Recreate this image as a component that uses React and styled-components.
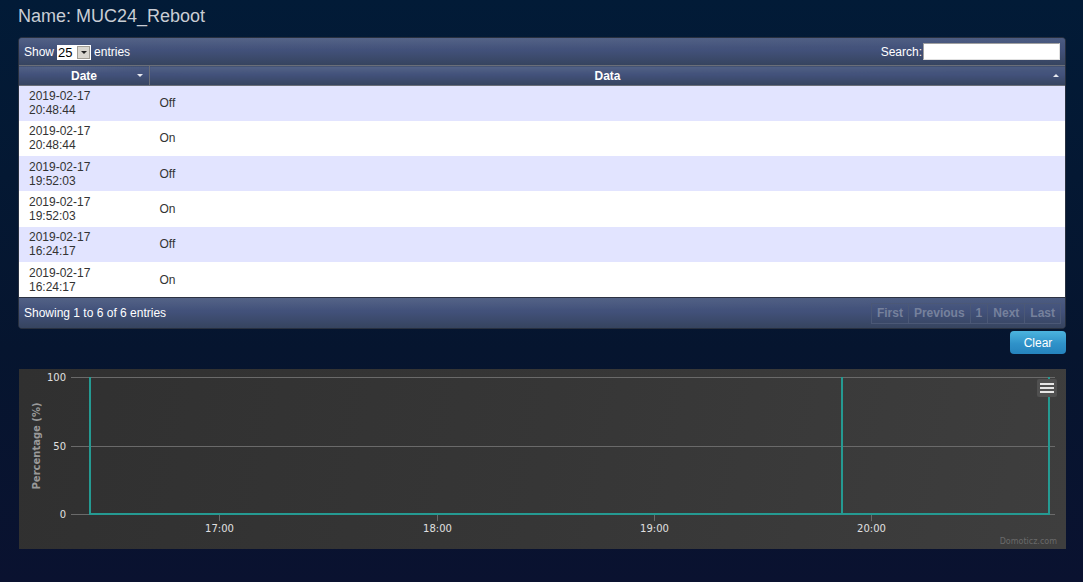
import React from 'react';
import styled, { createGlobalStyle } from 'styled-components';

const GlobalStyle = createGlobalStyle`
  html, body {
    margin: 0;
    padding: 0;
    height: 100%;
  }
  body {
    background: linear-gradient(to bottom, #021b37 0%, #06152f 60%, #0a1230 100%);
    font-family: "Liberation Sans", Arial, sans-serif;
    min-height: 582px;
  }
`;

const rows = [
  { date: '2019-02-17', time: '20:48:44', data: 'Off' },
  { date: '2019-02-17', time: '20:48:44', data: 'On' },
  { date: '2019-02-17', time: '19:52:03', data: 'Off' },
  { date: '2019-02-17', time: '19:52:03', data: 'On' },
  { date: '2019-02-17', time: '16:24:17', data: 'Off' },
  { date: '2019-02-17', time: '16:24:17', data: 'On' },
];

const pages = ['First', 'Previous', '1', 'Next', 'Last'];

const Page = styled.div`
  width: 1048px;
  padding: 0 17px 0 18px;
  min-height: 582px;
`;

const Title = styled.h2`
  margin: 0;
  padding: 6px 0 0;
  height: 37px;
  box-sizing: border-box;
  font-size: 18px;
  font-weight: normal;
  line-height: 20px;
  color: #c9cdd4;
`;

const TableWrapper = styled.div`
  border: 1px solid #28303f;
  border-radius: 4px;
  overflow: hidden;
  background: #3c4a6b;
`;

const barGradient = `
  background:
    radial-gradient(ellipse 120% 60% at 30% 0%, rgba(255,255,255,0.06), rgba(255,255,255,0) 70%),
    linear-gradient(to bottom, #4a5a80 0%, #42517a 45%, #36445f 100%);
`;

const Toolbar = styled.div`
  ${barGradient}
  height: 27px;
  display: flex;
  align-items: center;
  justify-content: space-between;
  padding: 0 5px;
  color: #fff;
  font-size: 12px;
`;

const LengthControl = styled.label`
  display: flex;
  align-items: center;
  gap: 3px;
`;

const Select = styled.span`
  display: inline-flex;
  height: 15px;
  margin-top: 1px;
  background: #fff;
  color: #000;
  font-size: 13px;
  line-height: 15px;
`;

const SelectValue = styled.span`
  width: 19px;
  padding-left: 1px;
`;

const SelectArrow = styled.span`
  width: 13px;
  height: 13px;
  margin: 1px 1px 0 0;
  background: #d9d6cf;
  border: 1px solid #a19d94;
  box-sizing: border-box;
  display: flex;
  align-items: center;
  justify-content: center;

  &:after {
    content: '';
    border-left: 3px solid transparent;
    border-right: 3px solid transparent;
    border-top: 3px solid #222;
  }
`;

const SearchControl = styled.label`
  display: flex;
  align-items: center;
`;

const SearchInput = styled.span`
  display: block;
  width: 137px;
  height: 17px;
  margin-left: 1px;
  background: #fff;
  border: 1px solid #a0a0a0;
  border-right-color: #e0e0e0;
  border-bottom-color: #e0e0e0;
  box-sizing: border-box;
`;

const Table = styled.table`
  width: 100%;
  border-collapse: collapse;
  table-layout: fixed;
  font-size: 12px;
`;

const HeadCell = styled.th`
  ${barGradient}
  position: relative;
  height: 19px;
  padding: 0;
  border-top: 1px solid #6a6e78;
  border-bottom: 1px solid #6a6e78;
  border-left: ${p => (p.$first ? 'none' : '1px solid #6a6e78')};
  color: #fff;
  font-weight: bold;
  text-align: center;
  width: ${p => p.$width || 'auto'};
`;

const SortIcon = styled.span`
  position: absolute;
  right: ${p => p.$right}px;
  top: 8px;
  border-left: 3px solid transparent;
  border-right: 3px solid transparent;
  ${p => (p.$up ? 'border-bottom: 3px solid #e8eaf0;' : 'border-top: 3px solid #e8eaf0;')}
`;

const Row = styled.tr`
  background: ${p => (p.$odd ? '#e2e4ff' : '#ffffff')};
`;

const Cell = styled.td`
  height: 35.3px;
  padding: 0 10px;
  color: #333;
  line-height: 14px;
  vertical-align: middle;
  box-sizing: border-box;
`;

const Footer = styled.div`
  ${barGradient}
  height: 30px;
  border-top: 1px solid #2c3242;
  display: flex;
  align-items: center;
  justify-content: space-between;
  padding: 0 4px 0 5px;
  color: #fff;
  font-size: 12px;
`;

const Pager = styled.div`
  display: flex;
`;

const PageButton = styled.span`
  padding: 2px 5px 3px;
  border: 1px solid #4b5876;
  margin-left: -1px;
  color: #76819c;
  font-weight: bold;
  font-size: 12px;
  line-height: 14px;
`;

const Actions = styled.div`
  display: flex;
  justify-content: flex-end;
  padding-top: 2px;
`;

const ClearButton = styled.button`
  width: 56px;
  height: 23px;
  border: none;
  border-radius: 4px;
  background: linear-gradient(to bottom, #4cb4de 0%, #2f92c9 55%, #2583bd 100%);
  color: #fff;
  font-family: "Liberation Sans", Arial, sans-serif;
  font-size: 12px;
  padding: 0;
`;

const ChartBox = styled.div`
  margin: 15px 0 0 1px;
  width: 1047px;
  height: 180px;
  background: linear-gradient(100deg, #303030 0%, #363636 50%, #3e3e3e 100%);
  position: relative;
`;

const MenuButton = styled.div`
  position: absolute;
  left: 1018px;
  top: 10px;
  width: 20px;
  height: 18px;
  background: #505050;
  border-radius: 2px;
  display: flex;
  flex-direction: column;
  justify-content: center;
  align-items: center;
  gap: 2px;
`;

const MenuBar = styled.span`
  width: 14px;
  height: 2px;
  background: #e6e6e6;
`;

const gridY = [
  { y: 8.5, label: '100' },
  { y: 77.5, label: '50' },
  { y: 145.5, label: '0' },
];

const ticks = [
  { x: 200.5, label: '17:00' },
  { x: 418.5, label: '18:00' },
  { x: 635.5, label: '19:00' },
  { x: 852.5, label: '20:00' },
];

const chartFont = '"DejaVu Sans", "Open Sans", sans-serif';

function Chart() {
  return (
    <ChartBox>
      <svg width="1047" height="180" style={{ display: 'block' }}>
        {gridY.map(g => (
          <g key={g.label}>
            <line x1="52" x2="1036" y1={g.y} y2={g.y} stroke="#6a6a6a" strokeWidth="1" />
            <text x="47" y={g.y + 3.5} textAnchor="end" fill="#e0e0e0" fontSize="10" fontFamily={chartFont}>
              {g.label}
            </text>
          </g>
        ))}
        {ticks.map(t => (
          <g key={t.label}>
            <line x1={t.x} x2={t.x} y1="145" y2="152" stroke="#6a6a6a" strokeWidth="1" />
            <text x={t.x} y="163" textAnchor="middle" fill="#e0e0e0" fontSize="10" fontFamily={chartFont}>
              {t.label}
            </text>
          </g>
        ))}
        <text
          transform="translate(21 77) rotate(-90)"
          textAnchor="middle"
          fill="#9a9a9a"
          fontSize="10"
          fontWeight="bold"
          fontFamily={chartFont}
        >
          Percentage (%)
        </text>
        {/* step series: on/off switching */}
        <polyline
          points="71,145 71,8 71,145 823,145 823,8 823,145 1030,145 1030,8"
          fill="none"
          stroke="#259a92"
          strokeWidth="2"
        />
        <text x="1038" y="175" textAnchor="end" fill="#6a6a6a" fontSize="8" fontFamily={chartFont}>
          Domoticz.com
        </text>
      </svg>
      <MenuButton>
        <MenuBar />
        <MenuBar />
        <MenuBar />
      </MenuButton>
    </ChartBox>
  );
}

export default function App() {
  return (
    <>
      <GlobalStyle />
      <Page>
        <Title>Name: MUC24_Reboot</Title>
        <TableWrapper>
          <Toolbar>
            <LengthControl>
              Show
              <Select>
                <SelectValue>25</SelectValue>
                <SelectArrow />
              </Select>
              entries
            </LengthControl>
            <SearchControl>
              Search:
              <SearchInput />
            </SearchControl>
          </Toolbar>
          <Table>
            <thead>
              <tr>
                <HeadCell $first $width="130px">
                  Date
                  <SortIcon $right={6} />
                </HeadCell>
                <HeadCell>
                  Data
                  <SortIcon $right={6} $up />
                </HeadCell>
              </tr>
            </thead>
            <tbody>
              {rows.map((r, i) => (
                <Row key={i} $odd={i % 2 === 0}>
                  <Cell>
                    {r.date}
                    <br />
                    {r.time}
                  </Cell>
                  <Cell>{r.data}</Cell>
                </Row>
              ))}
            </tbody>
          </Table>
          <Footer>
            <span>Showing 1 to 6 of 6 entries</span>
            <Pager>
              {pages.map(p => (
                <PageButton key={p}>{p}</PageButton>
              ))}
            </Pager>
          </Footer>
        </TableWrapper>
        <Actions>
          <ClearButton>Clear</ClearButton>
        </Actions>
        <Chart />
      </Page>
    </>
  );
}
